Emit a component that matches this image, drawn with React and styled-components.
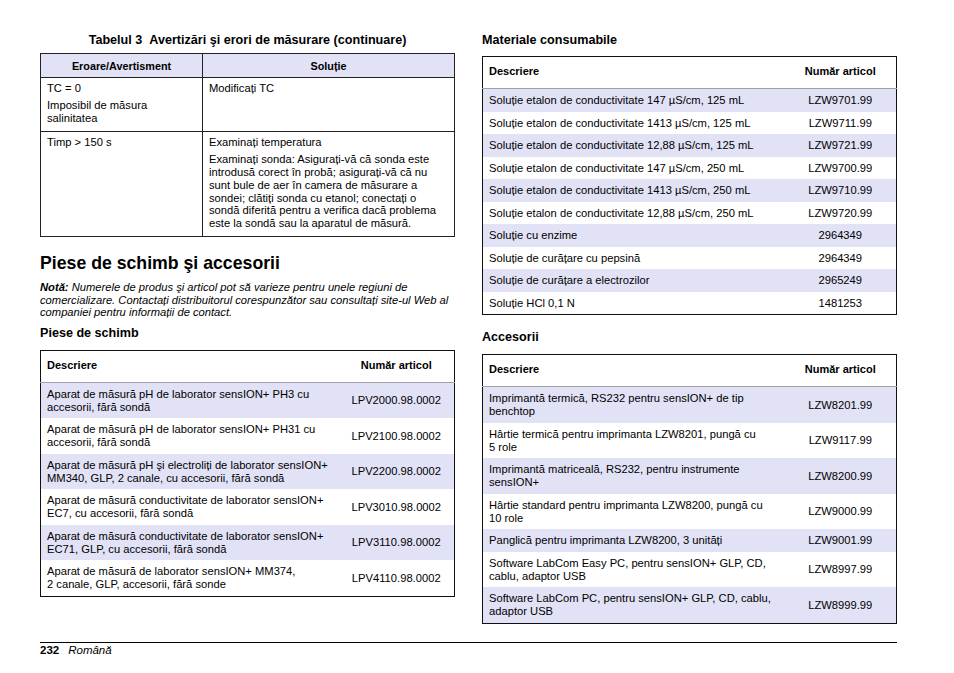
import React from "react";
import styled, { createGlobalStyle } from "styled-components";

const lavender = "#e2e2f6";

const GlobalStyle = createGlobalStyle`
  body {
    margin: 0;
    background: #fff;
    color: #000;
    font-family: "Liberation Sans", Arial, sans-serif;
  }
`;

const errors = [
  {
    error: ["TC = 0", "Imposibil de măsura salinitatea"],
    solution: ["Modificați TC"],
  },
  {
    error: ["Timp > 150 s"],
    solution: [
      "Examinați temperatura",
      "Examinați sonda: Asigurați-vă că sonda este introdusă corect în probă; asigurați-vă că nu sunt bule de aer în camera de măsurare a sondei; clătiți sonda cu etanol; conectați o sondă diferită pentru a verifica dacă problema este la sondă sau la aparatul de măsură.",
    ],
  },
];

const spareParts = [
  ["Aparat de măsură pH de laborator sensION+ PH3 cu accesorii, fără sondă", "LPV2000.98.0002"],
  ["Aparat de măsură pH de laborator sensION+ PH31 cu accesorii, fără sondă", "LPV2100.98.0002"],
  ["Aparat de măsură pH şi electroliți de laborator sensION+ MM340, GLP, 2 canale, cu accesorii, fără sondă", "LPV2200.98.0002"],
  ["Aparat de măsură conductivitate de laborator sensION+ EC7, cu accesorii, fără sondă", "LPV3010.98.0002"],
  ["Aparat de măsură conductivitate de laborator sensION+ EC71, GLP, cu accesorii, fără sondă", "LPV3110.98.0002"],
  ["Aparat de măsură de laborator sensION+ MM374,\n2 canale, GLP, accesorii, fără sonde", "LPV4110.98.0002"],
];

const consumables = [
  ["Soluție etalon de conductivitate 147 µS/cm, 125 mL", "LZW9701.99"],
  ["Soluție etalon de conductivitate 1413 µS/cm, 125 mL", "LZW9711.99"],
  ["Soluție etalon de conductivitate 12,88 µS/cm, 125 mL", "LZW9721.99"],
  ["Soluție etalon de conductivitate 147 µS/cm, 250 mL", "LZW9700.99"],
  ["Soluție etalon de conductivitate 1413 µS/cm, 250 mL", "LZW9710.99"],
  ["Soluție etalon de conductivitate 12,88 µS/cm, 250 mL", "LZW9720.99"],
  ["Soluție cu enzime", "2964349"],
  ["Soluție de curățare cu pepsină", "2964349"],
  ["Soluție de curățare a electrozilor", "2965249"],
  ["Soluție HCl 0,1 N", "1481253"],
];

const accessories = [
  ["Imprimantă termică, RS232 pentru sensION+ de tip benchtop", "LZW8201.99"],
  ["Hârtie termică pentru imprimanta LZW8201, pungă cu\n5 role", "LZW9117.99"],
  ["Imprimantă matriceală, RS232, pentru instrumente sensION+", "LZW8200.99"],
  ["Hârtie standard pentru imprimanta LZW8200, pungă cu\n10 role", "LZW9000.99"],
  ["Panglică pentru imprimanta LZW8200, 3 unități", "LZW9001.99"],
  ["Software LabCom Easy PC, pentru sensION+ GLP, CD, cablu, adaptor USB", "LZW8997.99"],
  ["Software LabCom PC, pentru sensION+ GLP, CD, cablu, adaptor USB", "LZW8999.99"],
];

const PartsTable = ({ items, numWidth }) => (
  <Table>
    <colgroup>
      <col />
      <col style={{ width: numWidth }} />
    </colgroup>
    <thead>
      <tr>
        <HeadCell>Descriere</HeadCell>
        <HeadCell $center>Număr articol</HeadCell>
      </tr>
    </thead>
    <tbody>
      {items.map(([desc, num], i) => (
        <Row key={num + i} $shade={i % 2 === 0}>
          <Cell>{desc}</Cell>
          <Cell $center>{num}</Cell>
        </Row>
      ))}
    </tbody>
  </Table>
);

const App = () => {
  return (
    <>
      <GlobalStyle />
      <Page>
        <Columns>
          <Column>
            <Caption>Tabelul 3&nbsp;&nbsp;Avertizări şi erori de măsurare (continuare)</Caption>
            <ErrorTable>
              <colgroup>
                <col style={{ width: 162 }} />
                <col />
              </colgroup>
              <thead>
                <tr>
                  <ErrorHead>Eroare/Avertisment</ErrorHead>
                  <ErrorHead>Soluție</ErrorHead>
                </tr>
              </thead>
              <tbody>
                {errors.map((row, i) => (
                  <tr key={i}>
                    <ErrorCell>
                      {row.error.map((t) => (
                        <Para key={t}>{t}</Para>
                      ))}
                    </ErrorCell>
                    <ErrorCell>
                      {row.solution.map((t) => (
                        <Para key={t}>{t}</Para>
                      ))}
                    </ErrorCell>
                  </tr>
                ))}
              </tbody>
            </ErrorTable>

            <Heading>Piese de schimb şi accesorii</Heading>
            <Note>
              <b>Notă:</b> Numerele de produs şi articol pot să varieze pentru unele regiuni de
              comercializare. Contactați distribuitorul corespunzător sau consultați site-ul Web al
              companiei pentru informații de contact.
            </Note>
            <SubHeading $space={7}>Piese de schimb</SubHeading>
            <PartsTable items={spareParts} numWidth={116} />
          </Column>

          <Column>
            <SubHeading $space={0}>Materiale consumabile</SubHeading>
            <PartsTable items={consumables} numWidth={112} />
            <SubHeading $space={15}>Accesorii</SubHeading>
            <PartsTable items={accessories} numWidth={112} />
          </Column>
        </Columns>

        <Footer>
          <PageNum>232</PageNum>
          <Lang>Română</Lang>
        </Footer>
      </Page>
    </>
  );
};

const Page = styled.div`
  width: 954px;
  height: 673px;
  box-sizing: border-box;
  padding: 33px 57px 0 40px;
`;

const Columns = styled.div`
  display: grid;
  grid-template-columns: 415px 415px;
  column-gap: 27px;
  align-items: start;
  height: 609px;
`;

const Column = styled.div`
  display: flex;
  flex-direction: column;
`;

const Caption = styled.div`
  font-size: 12.6px;
  font-weight: bold;
  line-height: 14px;
  text-align: center;
  margin-bottom: 6px;
`;

const ErrorTable = styled.table`
  width: 415px;
  border-collapse: collapse;
  table-layout: fixed;
  border: 1px solid #222;
`;

const ErrorHead = styled.th`
  height: 23px;
  padding: 0 6px;
  background: ${lavender};
  border: 1px solid #222;
  font-size: 10.8px;
  font-weight: bold;
  text-align: center;
`;

const ErrorCell = styled.td`
  vertical-align: top;
  padding: 4px 6px 6px;
  border: 1px solid #222;
  font-size: 11.2px;
  line-height: 12.8px;
`;

const Para = styled.p`
  margin: 0;
  & + & {
    margin-top: 4.5px;
  }
`;

const Heading = styled.h1`
  margin: 16px 0 8px;
  font-size: 17.7px;
  line-height: 20px;
  font-weight: bold;
`;

const Note = styled.p`
  margin: 0;
  font-size: 11.2px;
  line-height: 12.6px;
  font-style: italic;
`;

const SubHeading = styled.h2`
  margin: ${(p) => p.$space}px 0 ${(p) => (p.$space ? 10 : 9)}px;
  font-size: 12.6px;
  line-height: 14px;
  font-weight: bold;
`;

const Table = styled.table`
  width: 100%;
  border-collapse: collapse;
  table-layout: fixed;
  border: 1px solid #111;
`;

const HeadCell = styled.th`
  height: 28px;
  padding: 0 6px 3px;
  font-size: 11px;
  font-weight: bold;
  text-align: ${(p) => (p.$center ? "center" : "left")};
  border-bottom: 1px solid #a0a0a8;
`;

const Row = styled.tr`
  background: ${(p) => (p.$shade ? lavender : "#fff")};
`;

const Cell = styled.td`
  padding: 5px 6px 4.5px;
  font-size: 11.2px;
  line-height: 13px;
  white-space: pre-line;
  vertical-align: middle;
  text-align: ${(p) => (p.$center ? "center" : "left")};
`;

const Footer = styled.div`
  display: flex;
  align-items: baseline;
  gap: 9px;
  border-top: 1px solid #000;
  padding-top: 1px;
  font-size: 11.5px;
  line-height: 13px;
`;

const PageNum = styled.span`
  font-weight: bold;
`;

const Lang = styled.span`
  font-style: italic;
`;

export default App;
